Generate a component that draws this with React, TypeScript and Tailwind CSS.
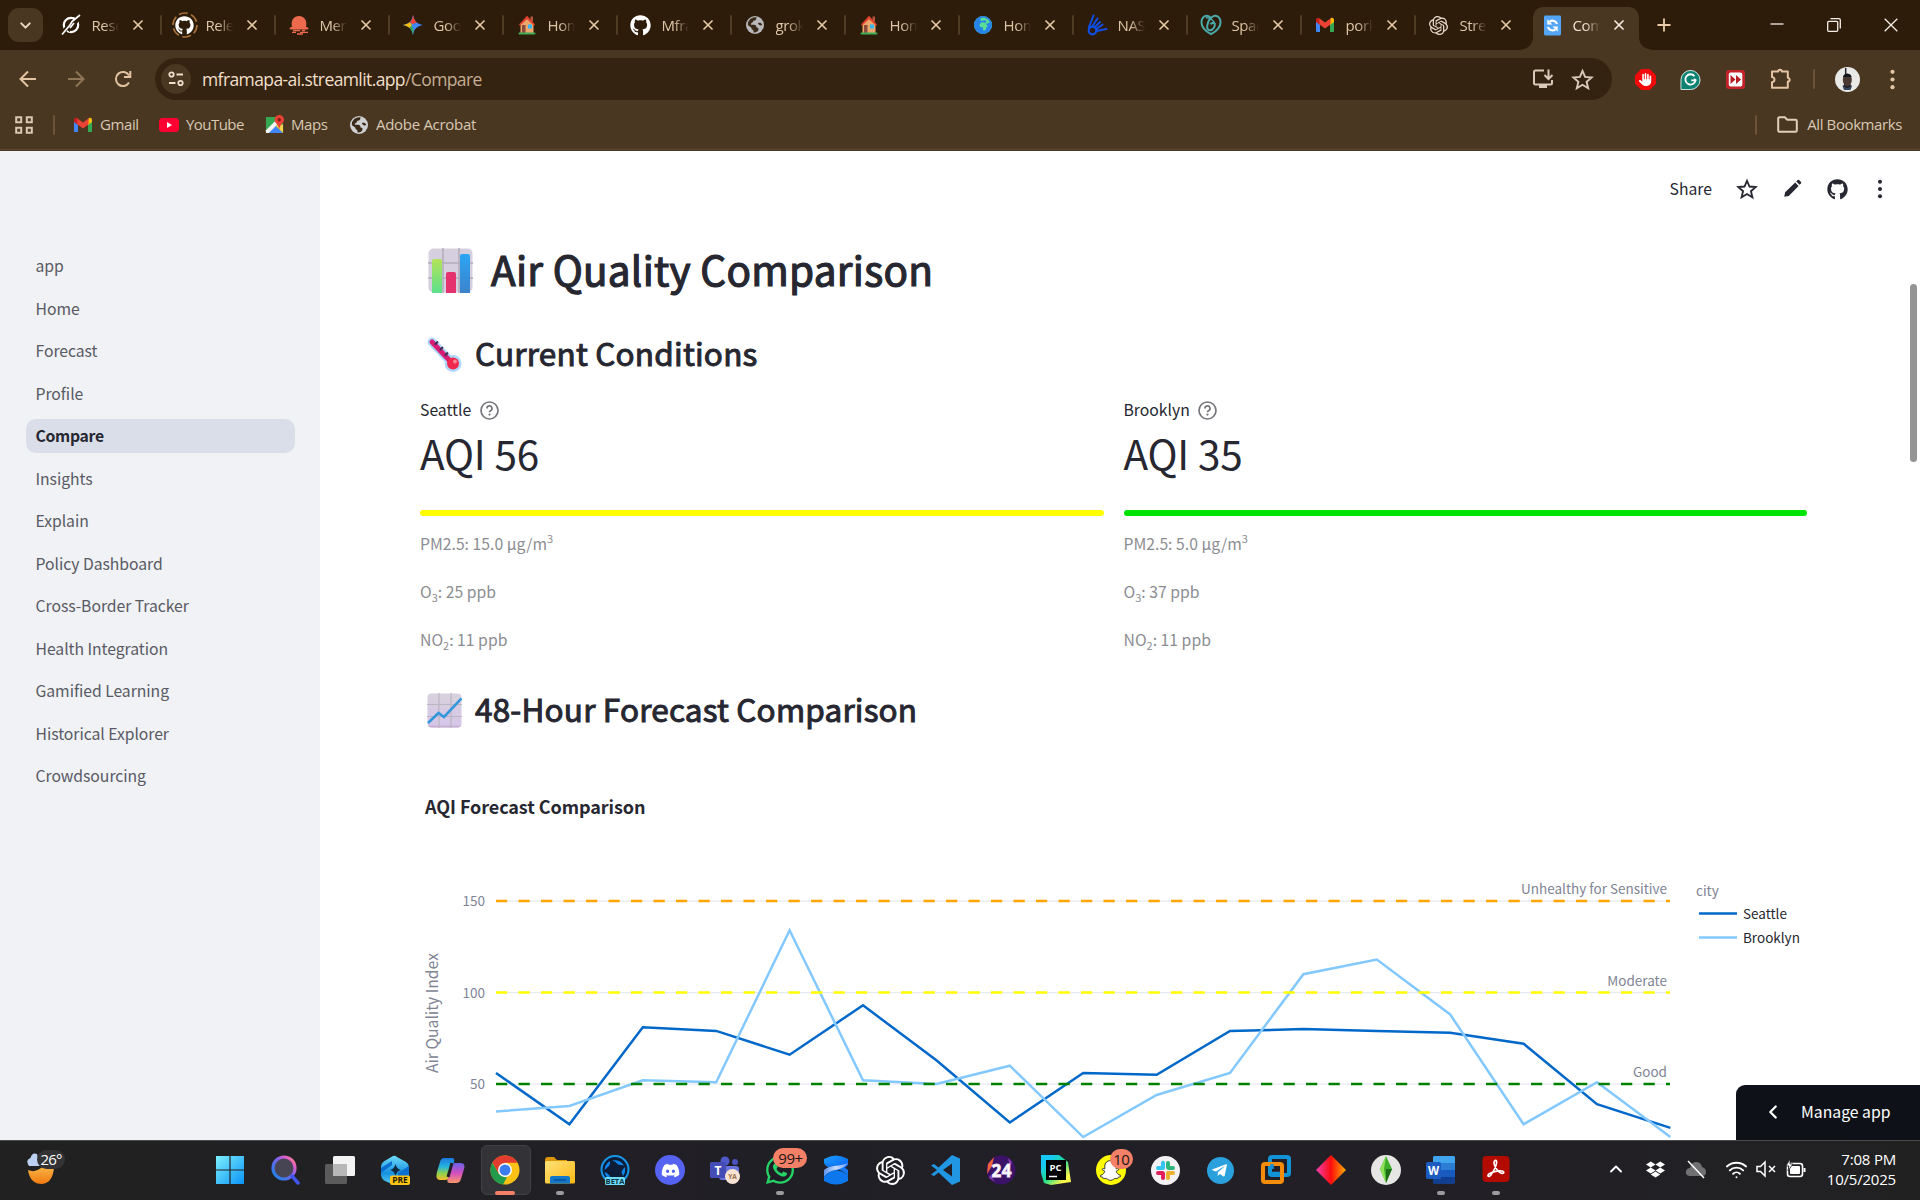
import React from "react";
import { FaGithub, FaDiscord, FaWhatsapp, FaSnapchatGhost, FaTelegramPlane, FaDropbox } from "react-icons/fa";
import { FaEarthAfrica, FaHand } from "react-icons/fa6";
import { SiOpenai } from "react-icons/si";
import { X, ChevronDown, ChevronLeft, ChevronUp, Wifi, Plus } from "lucide-react";

type P = { children?: React.ReactNode };

const Svg = ({ s = 24, vb = "0 0 24 24", children }: P & { s?: number; vb?: string }) => (
  <svg width={s} height={s} viewBox={vb} fill="none" className="shrink-0">{children}</svg>
);

/* ---------- favicons ---------- */
const House = () => (
  <Svg s={20} vb="0 0 20 20">
    <rect x="13.5" y="1.500" width="2.500" height="5" fill="#b5563c" />
    <path d="M3.500 9 10 3l6.500 6V18h-13z" fill="#eda76c" />
    <path d="M2 9.600 10 .8l8 8.800-1 1.200L10 4.200 3 10.800z" fill="#e4442f" />
    <rect x="5" y="10" width="3.500" height="8" fill="#8a4b3b" />
    <rect x="11" y="9.500" width="4" height="4" fill="#37b5f1" />
    <rect x="1.500" y="17.600" width="17" height="1.800" rx=".9" fill="#3fae57" />
  </Svg>
);
const Orbit = () => (
  <Svg s={22} vb="0 0 22 22">
    <circle cx="11" cy="11" r="7.200" stroke="#fff" strokeWidth="2.200" />
    <path d="M2 20 7 13.500M20 2l-6 8.500-6 6" stroke="#2d1c0a" strokeWidth="4" />
    <path d="M2 20.500 10 11l2-3.500L20 1" stroke="#fff" strokeWidth="1.700" />
    <path d="m10 14 4-5" stroke="#fff" strokeWidth="1.700" />
  </Svg>
);
const RingHub = () => (
  <div className="relative flex h-6 w-6 items-center justify-center text-white">
    <FaGithub size={19} />
    <svg width="26" height="26" viewBox="0 0 26 26" className="absolute -left-px -top-px"><circle cx="13" cy="13" r="12" fill="none" stroke="#a9733a" strokeWidth="1.600" strokeDasharray="9 3.500" /></svg>
  </div>
);
const Jelly = () => (
  <Svg s={20} vb="0 0 20 20">
    <path d="M.5 13.500c0-1 1-1 2.500-1.500C1.500 5 5 1 10 1s8.500 4 7 11c1.500.5 2.500.5 2.500 1.500 0 .8-1 1-2 1H2.500c-1 0-2-.2-2-1z" fill="#ee6a4e" />
    <path d="M4 15.500h7M13 15.500h3M3 17.300h4M11 17.300h8M8 19h6" stroke="#ee6a4e" strokeWidth="1.300" />
  </Svg>
);
const Gemini = () => (
  <Svg s={20} vb="0 0 20 20">
    <path d="M10 0c1 6 4 9 10 10-6 1-9 4-10 10C9 14 6 11 0 10 6 9 9 6 10 0z" fill="#3f87f5" />
    <path d="M10 0c1 4 2 6 4 7.500L10 9 6.500 7.500C9 6 9.500 3 10 0z" fill="#ea4335" />
    <path d="M0 10c3-.5 5-1.300 6.500-2.800L9 10l-2.500 3C5 11.500 3 10.500 0 10z" fill="#fbbc04" />
    <path d="M6.600 12.900 9 10.500l1.500 5L10 20c-.6-3.300-1.600-5.600-3.400-7.100z" fill="#34a853" />
  </Svg>
);
const Globe = ({ c = "#b9b9bb", s = 20 }: { c?: string; s?: number }) => (
  <Svg s={s} vb="0 0 20 20">
    <circle cx="10" cy="10" r="9" fill={c} />
    <path d="M11.500 2.300c-.3 1.700-.2 3.200-2 3.200-1.500 0-1.500 1.500-2 2-1 .8-2.200.8-1.500 2.300h3c1.800 0 2.500 1.200 2.500 2.700 1.200.3 2 .2 2 1.500 0 1.700-.9 3.200-3.700 3.600-1.500.1-1.300-.1-1.300-1.300.4-1.500-2-1.300-2-3 0-1.200-1.500-1.400-3.700-3.300A7.300 7.300 0 0 1 11.500 2.300z" fill="#3b2a19" />
    <path d="M13 8c1.500-.8 3.500-.2 4.200 1.500-.5 1.300-1.700 1.300-2.500.7-.9-.3-1.700-1.200-1.700-2.200z" fill="#3b2a19" />
  </Svg>
);
const Earth = () => (
  <div className="flex h-[18px] w-[18px] items-center justify-center rounded-full bg-[#5cdd98] text-[#2583ea]"><FaEarthAfrica size={18} /></div>
);
const Nasa = () => (
  <Svg s={22} vb="0 0 22 22">
    <circle cx="6.500" cy="16.500" r="3.800" stroke="#0f4fe6" strokeWidth="2.200" />
    <path d="M3 13 7.500 1.500M6.500 12 11.500 4.500M9 13l5-5M10.500 15l6-4.500M10.500 17l10-2" stroke="#0f4fe6" strokeWidth="2" strokeLinecap="round" />
  </Svg>
);
const Knot = () => (
  <Svg s={22} vb="0 0 22 22">
    <path d="M10.500 3.500C6.500 0 1.500 2.500 1.500 8.500c0 5 4.500 9 9.500 11.700 5-2.700 9.500-6.700 9.500-11.700 0-6-5-8.500-9-5C7 7 5.500 16 9.500 16.200c4 .2 6-4.700 5-6.700-.8-1.200-3-.5-4 .8" stroke="#4aa9a9" strokeWidth="2" />
    <path d="M6 4c4-1 8 3 9 6" stroke="#4aa9a9" strokeWidth="1.500" />
  </Svg>
);
const Gmail = ({ s = 20 }: { s?: number }) => (
  <Svg s={s} vb="0 0 20 20">
    <path d="M1 5.500V16c0 .6.500 1 1 1h3V8z" fill="#4285f4" />
    <path d="M19 5.500V16c0 .6-.5 1-1 1h-3V8z" fill="#34a853" />
    <path d="M15 5v5l4-3V5c0-2-2-2.800-3.300-1.800z" fill="#fbbc04" />
    <path d="M1 5v2l4 3V5l-.7-1.800C3 2.200 1 3 1 5z" fill="#c5221f" />
    <path d="M4.300 3.200 10 7.500l5.700-4.300L15.500 9.500 10 13.500 4.500 9.500z" fill="#ea4335" />
  </Svg>
);
const Sync = () => (
  <svg width="17" height="21" viewBox="0 0 18 21" fill="none">
    <rect width="18" height="21" rx="1.500" fill="#54a5f5" />
    <path d="M6 6.200c3-1.800 7-.6 7.800 2.800M12 14.800c-3 1.800-7 .6-7.800-2.800" stroke="#fff" strokeWidth="2.200" />
    <path d="M3.500 4v5.500H9zM14.500 17v-5.500H9z" fill="#fff" />
  </svg>
);

const tabs: [React.ReactNode, string][] = [
  [<Orbit />, "Rese"], [<RingHub />, "Relea"], [<Jelly />, "Mem"], [<Gemini />, "Goog"], [<House />, "Home"],
  [<FaGithub size={21} color="#fff" />, "Mfra"], [<Globe />, "grok"], [<House />, "Home"], [<Earth />, "Home"],
  [<Nasa />, "NASA"], [<Knot />, "Spac"], [<Gmail />, "porka"], [<SiOpenai size={19} color="#e9dccd" />, "Stre"],
];

const TabBody = ({ icon, label, active }: { icon: React.ReactNode; label: string; active?: boolean }) => (
  <>
    <div className="ml-[11.500px] flex w-6 shrink-0 items-center justify-center">{icon}</div>
    <div className={"w-[27px] overflow-hidden whitespace-nowrap text-[15px] tracking-[-0.4px] [mask-image:linear-gradient(to_right,#000_45%,transparent)] " + (active ? "ml-2 text-[#f0e2d2]" : "ml-[9px] text-[#dfc5a8]")}>{label}</div>
    <div className={"flex w-5 justify-center " + (active ? "ml-[9px] text-[#f4e8dc]" : "ml-[9px] text-[#e2c6a5]")}><X size={16} strokeWidth={2.600} /></div>
  </>
);

const TabStrip = () => (
  <div className="flex h-[50px] items-center bg-[#2d1c0a]">
    <div className="ml-2 flex h-[34px] w-[35px] items-center justify-center rounded-[11px] bg-[#4a3721] text-[#eddac6]"><ChevronDown size={17} strokeWidth={2.800} /></div>
    <div className="ml-1 flex items-center">
      {tabs.map(([icon, label], i) => (
        <div key={i} className="flex h-[34px] w-[114px] items-center">
          <TabBody icon={icon} label={label} />
          <div className={"-mr-px ml-auto h-5 w-0.5 rounded " + (i === 12 ? "bg-transparent" : "bg-[#4f3c25]")} />
        </div>
      ))}
    </div>
    <div className="relative flex h-[43px] w-[112px] items-center self-end">
      <svg width="138" height="43" viewBox="0 0 138 43" className="absolute -left-3 top-0"><path d="M0 43c10 0 16-5 16-13V12C16 4 20 0 27 0h84c7 0 11 4 11 12v18c0 8 6 13 16 13z" fill="#4a3721" /></svg>
      <div className="relative flex items-center pb-[7px]"><TabBody icon={<Sync />} label="Comp" active /></div>
    </div>
    <div className="ml-[13px] text-[#eacdab]"><Plus size={20} strokeWidth={2.200} /></div>
    <div className="ml-auto mr-[22px] flex items-center gap-[43px] text-[#f6efe7]">
      <Svg s={14} vb="0 0 14 14"><path d="M.5 6h13" stroke="currentColor" strokeWidth="1.300" /></Svg>
      <Svg s={14} vb="0 0 14 14"><rect x=".7" y="3.300" width="10" height="10" rx="1" stroke="currentColor" strokeWidth="1.300" /><path d="M3.500.7H12c.8 0 1.300.5 1.300 1.300v8.500" stroke="currentColor" strokeWidth="1.300" /></Svg>
      <Svg s={14} vb="0 0 14 14"><path d="m.7.7 12.600 12.600m0-12.600L.7 13.300" stroke="currentColor" strokeWidth="1.300" /></Svg>
    </div>
  </div>
);

const Star = ({ s = 20, w = 1.8 }: { s?: number; w?: number }) => (
  <Svg s={s}><path d="m12 3 2.700 6.300 6.800.6-5.200 4.500 1.600 6.700L12 17.500 6.100 21.100l1.600-6.700L2.500 9.900l6.800-.6z" stroke="currentColor" strokeWidth={w} /></Svg>
);
const Dots = ({ s = 24 }: { s?: number }) => (
  <Svg s={s}><circle cx="12" cy="4" r="2.200" fill="currentColor" /><circle cx="12" cy="12" r="2.200" fill="currentColor" /><circle cx="12" cy="20" r="2.200" fill="currentColor" /></Svg>
);

const Toolbar = () => (
  <div className="flex h-[58px] items-center bg-[#4a3721] text-[#e3c5a3]">
    <div className="ml-[18.500px]"><Svg s={18} vb="0 0 18 18"><path d="M17 9H2M9 1.500 1.500 9 9 16.500" stroke="currentColor" strokeWidth="2" /></Svg></div>
    <div className="ml-[30px] text-[#8f7656]"><Svg s={18} vb="0 0 18 18"><path d="M1 9h15M9 1.500 16.500 9 9 16.500" stroke="currentColor" strokeWidth="2" /></Svg></div>
    <div className="ml-[29px]"><Svg s={18} vb="0 0 18 18"><path d="M15 12.500A7 7 0 1 1 15 5.500" stroke="currentColor" strokeWidth="2" /><path d="M16.300 1v6H10" stroke="currentColor" strokeWidth="2" /></Svg></div>
    <div className="ml-[23.500px] flex h-[42px] w-[1457px] items-center rounded-full bg-[#342310]">
      <div className="ml-[6px] flex h-[30px] w-[30px] items-center justify-center rounded-full bg-[#4a3721] text-[#efdecb]">
        <Svg s={16} vb="0 0 16 16"><circle cx="3.500" cy="3.500" r="2.200" stroke="currentColor" strokeWidth="1.800" /><path d="M8.500 3.500H15M1 12h6.500" stroke="currentColor" strokeWidth="1.900" /><circle cx="12.500" cy="12" r="2.200" stroke="currentColor" strokeWidth="1.800" /></Svg>
      </div>
      <div className="ml-[11px] pt-px text-[17.500px] leading-none tracking-[-0.600px] text-[#f2dfca]">mframapa-ai.streamlit.app<span className="text-[#c4ad94]">/Compare</span></div>
      <div className="ml-auto mr-[18px] flex items-center gap-[17.500px] text-[#d9c9b8]">
        <Svg s={22} vb="0 0 22 22"><path d="M12 2.500H3.500c-1 0-1.500.5-1.500 1.500v11c0 1 .5 1.500 1.500 1.500h15c1 0 1.500-.5 1.500-1.500v-3" stroke="currentColor" strokeWidth="2" /><path d="M7 16h8v4H7z" fill="currentColor" /><path d="M16.500 1.500v9m-4-3.500 4 4 4-4" stroke="currentColor" strokeWidth="2" /></Svg>
        <Star s={23} w={2} />
      </div>
    </div>
    <div className="ml-[23px] flex items-center gap-[24px]">
      <div className="relative flex h-[21px] w-[21px] items-center justify-center text-white"><svg width="21" height="21" viewBox="0 0 21 21" className="absolute"><path d="M6.200 0h8.600L21 6.200v8.600L14.800 21H6.200L0 14.800V6.200z" fill="#f10a0a" /></svg><FaHand size={13} className="relative" /></div>
      <Svg s={21} vb="0 0 22 22"><path d="M1 21.500V11A10 10 0 1 1 11 21.500z" fill="#0b8272" stroke="#d8ece5" strokeWidth="1" /><path d="M15.200 7.500A5.400 5.400 0 1 0 16.300 12h-4.500m4.500 0-1.500-1.700" stroke="#fff" strokeWidth="1.900" /></Svg>
      <Svg s={21} vb="0 0 21 21"><rect x="1" y="1" width="19" height="19" rx="3" fill="#c4232b" /><rect x="3.800" y="3.500" width="13.500" height="14" rx="2" fill="#fff" /><path d="m5.500 6 5 4.500-5 4.500zM11 6l5 4.500-5 4.500z" fill="#b51f25" /></Svg>
      <Svg s={22} vb="0 0 22 22"><path d="M2 3.500h6.200a1.800 1.800 0 0 1 3.600 0h6v6.300a1.800 1.800 0 0 1 0 3.700v6.300H2v-5.500c3.300-.4 3.300-5 0-5.400z" stroke="currentColor" strokeWidth="2" strokeLinejoin="round" /></Svg>
    </div>
    <div className="ml-[21px] h-5 w-0.5 rounded bg-[#6b5238]" />
    <Avatar />
    <div className="ml-[21px]"><Dots s={23} /></div>
  </div>
);
const Avatar = () => (
  <div className="ml-5">
    <Svg s={25} vb="0 0 25 25"><circle cx="12.500" cy="12.500" r="12.500" fill="#e9e9e6" /><path d="M10.700 1v7" stroke="#23252d" strokeWidth="1.500" /><path d="M7.500 19c1.500-2 8-2 9.500 0l-1.500 4h-6.500z" fill="#39445d" /><ellipse cx="12.300" cy="13" rx="4.500" ry="6.500" fill="#4a3833" /><path d="M8 10c0-4.500 8.600-4.500 8.600 0z" fill="#15161b" /><path d="M9 17q3.300 5 6.600 0v2q-3.300 4-6.600 0z" fill="#1d1a1e" /></Svg>
  </div>
);

const Bookmarks = () => (
  <div className="flex h-[42px] items-center border-b border-[#5d4632] bg-[#4a3721] pb-[8px] pt-0 text-[15px] leading-none tracking-[-0.4px] text-[#d8c8b4]">
    <div className="ml-[15px]"><Svg s={18} vb="0 0 18 18"><path d="M1.200 1.200h5v5h-5zM11.800 1.200h5v5h-5zM1.200 11.800h5v5h-5zM11.800 11.800h5v5h-5z" stroke="currentColor" strokeWidth="2" /></Svg></div>
    <div className="ml-5 h-5 w-0.5 rounded bg-[#6b5238]" />
    <div className="ml-[18px]"><Gmail /></div><span className="ml-[7px] w-[59px]">Gmail</span>
    <svg width="20" height="14" viewBox="0 0 20 14" className="shrink-0"><rect width="20" height="14" rx="3.500" fill="#ff0033" /><path d="m8 4 5 3-5 3z" fill="#fff" /></svg>
    <span className="ml-[7px] w-[79px] whitespace-nowrap tracking-[-0.55px]">YouTube</span>
    <Svg s={19} vb="0 0 20 20"><path d="M1 2h11l7 7v10H1z" fill="#34a853" /><path d="m1 19 9-9 9 9z" fill="#4285f4" /><path d="m1 16 12-12 3 3L4 19H1z" fill="#f4f4f4" /><path d="m11 11 8 8v-9z" fill="#fbd24b" /><path d="M15 0a5 5 0 0 1 5 5c0 3.500-4 4.500-5 10-1-5.500-5-6.500-5-10a5 5 0 0 1 5-5z" fill="#ea4335" /><circle cx="15" cy="5" r="1.800" fill="#7b1d15" /></Svg>
    <span className="ml-[7px] w-[58px]">Maps</span>
    <Globe c="#cfd0d2" s={20} />
    <span className="ml-[7px] whitespace-nowrap tracking-[-0.3px]">Adobe Acrobat</span>
    <div className="ml-auto h-5 w-0.5 rounded bg-[#6b5238]" />
    <div className="ml-[20px]"><Svg s={21} vb="0 0 21 21"><path d="M1.200 4.500c0-.8.500-1.300 1.300-1.300h5.300l2.500 2.500h8.200c.8 0 1.300.5 1.300 1.300v9.500c0 .8-.5 1.300-1.300 1.300h-16c-.8 0-1.300-.5-1.300-1.300z" stroke="#e0cfbc" strokeWidth="2" /></Svg></div>
    <span className="ml-[9px] mr-[18px] whitespace-nowrap">All Bookmarks</span>
  </div>
);

/* ---------- page ---------- */
const nav = ["app", "Home", "Forecast", "Profile", "Compare", "Insights", "Explain", "Policy Dashboard", "Cross-Border Tracker", "Health Integration", "Gamified Learning", "Historical Explorer", "Crowdsourcing"];

const Sidebar = () => (
  <aside className="flex w-[320px] shrink-0 flex-col bg-[#f0f2f6] pl-[26px] pr-[25px] pt-[93.700px]">
    {nav.map((n) => (
      <div key={n} className="flex h-[42.500px] shrink-0 items-center">
        <div className={"flex h-[34px] w-full items-center rounded-[10px] pl-[9.500px] text-[15.750px] leading-none " + (n === "Compare" ? "bg-[#dadee9] font-bold text-[#262730] tracking-[-0.3px]" : "text-[#595a63] tracking-[-0.05px]")}>{n}</div>
      </div>
    ))}
  </aside>
);

const BarEmoji = () => (
  <Svg s={45} vb="0 0 45 45">
    <rect x=".5" y=".5" width="44" height="44" rx="5" fill="#d6cfdf" />
    <path d="M15 0v45M31 0v45M0 15h45M0 30h45" stroke="#b3adba" strokeWidth="1.500" />
    <defs><linearGradient id="gb" x1="0" y1="0" x2="0" y2="1"><stop stopColor="#b4e35a" /><stop offset="1" stopColor="#5be08b" /></linearGradient><linearGradient id="bb" x1="0" y1="0" x2="0" y2="1"><stop stopColor="#2ba6f3" /><stop offset="1" stopColor="#3c82cd" /></linearGradient></defs>
    <path d="M4 45V13q0-2 2-2h6q2 0 2 2v32z" fill="url(#gb)" /><path d="M18 45V26q0-2 2-2h6q2 0 2 2v19z" fill="#e5326f" /><path d="M32 45V8q0-2 2-2h6q2 0 2 2v37z" fill="url(#bb)" />
  </Svg>
);
const ThermoEmoji = () => (
  <Svg s={35} vb="0 0 35 35">
    <path d="m5 5 20 21" stroke="#add8fb" strokeWidth="9" strokeLinecap="round" /><circle cx="26" cy="26.500" r="8.500" fill="#add8fb" />
    <path d="m5 5 20 21" stroke="#d81d74" strokeWidth="5" strokeLinecap="round" /><circle cx="26" cy="26.500" r="6" fill="#f1294f" /><circle cx="28" cy="24.500" r="2" fill="#fb8695" />
    <path d="m8.500 7 1.800-1.800M13.500 12.500l1.800-1.800M18.500 18l1.800-1.800" stroke="#3b3158" strokeWidth="2.200" strokeLinecap="round" />
  </Svg>
);
const TrendEmoji = () => (
  <Svg s={35} vb="0 0 35 35">
    <defs><linearGradient id="tp" x1="0" y1="0" x2="0" y2="1"><stop stopColor="#d8d2dc" /><stop offset=".93" stopColor="#d5c6e8" /><stop offset="1" stopColor="#b89bc4" /></linearGradient></defs>
    <rect x=".5" y=".5" width="34" height="34" rx="4" fill="url(#tp)" />
    <path d="M12 0v35M24 0v35M0 11.500h35M0 23.500h35" stroke="#bcb5c3" strokeWidth="1.200" />
    <path d="M1 30 11.500 20l5.500 4L34.500 5.500" stroke="#3596dc" strokeWidth="2.600" />
  </Svg>
);

const Metric = ({ city, aqi, pm, o3, no2, bar }: { city: string; aqi: number; pm: string; o3: number; no2: number; bar: string }) => (
  <div className="flex w-[683.500px] flex-col">
    <div className="flex h-[30px] items-center text-[15.750px] leading-none text-[#262730]">
      {city}
      <span className="ml-[8.500px] text-[#75767c]"><Svg s={19} vb="0 0 19 19"><circle cx="9.500" cy="9.500" r="8.500" stroke="currentColor" strokeWidth="1.700" /><path d="M7 7.500a2.500 2.500 0 1 1 3.500 2.200c-.7.400-1 .7-1 1.600" stroke="currentColor" strokeWidth="1.700" /><circle cx="9.500" cy="13.600" r="1.100" fill="currentColor" /></Svg></span>
    </div>
    <div className="flex h-[60px] items-center pb-[4px] text-[40.500px] leading-none tracking-[-0.2px] text-[#262730]">AQI {aqi}</div>
    <div className={"mt-[25px] h-[6px] rounded-full " + bar} />
    <div className="mt-1 flex flex-col text-[15.750px] leading-none text-[#8c8d92]">
      <div className="flex h-12 items-center">PM2.5: {pm} μg/m<sup className="-top-1.5 text-[11px]">3</sup></div>
      <div className="flex h-12 items-center">O<sub className="top-[5px] text-[11px]">3</sub>: {o3} ppb</div>
      <div className="flex h-12 items-center">NO<sub className="top-[5px] text-[11px]">2</sub>: {no2} ppb</div>
    </div>
  </div>
);

const seattle = [56, 28, 81, 79, 66, 93, 63, 29, 56, 55, 79, 80, 79, 78, 72, 39, 26];
const brooklyn = [35, 38, 52, 51, 134, 52, 50, 60, 21, 44, 56, 110, 118, 88, 28, 51, 21];
const pts = (d: number[]) => d.map((v, i) => `${76 + i * 73.4},${328 - (v - 50) * 1.83}`).join(" ");
const levels: [number, number, string, string][] = [[145, 150, "#ffa500", "Unhealthy for Sensitive"], [236.5, 100, "#ffff00", "Moderate"], [328, 50, "#008000", "Good"]];

const Chart = () => (
  <svg width="1400" height="384" viewBox="0 0 1400 384" className="block shrink-0" fill="none">
    <text x="5" y="58" fontSize="18" fontWeight="700" fill="#262730" textLength="220.500">AQI Forecast Comparison</text>
    {levels.map(([y, v]) => (
      <g key={v}>
        <path d={`M76 ${y}H1250`} stroke="#e6eaf1" strokeWidth="1.250" />
        <text x="65" y={y + 5} fontSize="13.500" textAnchor="end" fill="#808495">{v}</text>
      </g>
    ))}
    <polyline points={pts(seattle)} stroke="#0068c9" strokeWidth="2.500" />
    <polyline points={pts(brooklyn)} stroke="#83c9ff" strokeWidth="2.500" />
    {levels.map(([y, v, c, t]) => (
      <g key={v}>
        <path d={`M76 ${y}H1250`} stroke={c} strokeWidth="2.500" strokeDasharray="11.250 11.250" />
        <text x="1247" y={y - 7} fontSize="13.500" textAnchor="end" fill="#808495">{t}</text>
      </g>
    ))}
    <text transform="translate(18 257) rotate(-90)" fontSize="15.750" textAnchor="middle" fill="#808495" textLength="120">Air Quality Index</text>
    <text x="1276" y="140" fontSize="13.500" fill="#808495">city</text>
    <path d="M1279 157.500h38" stroke="#0068c9" strokeWidth="2.500" />
    <path d="M1279 181.500h38" stroke="#83c9ff" strokeWidth="2.500" />
    <text x="1323" y="163" fontSize="13.500" fill="#262730">Seattle</text>
    <text x="1323" y="187" fontSize="13.500" fill="#262730">Brooklyn</text>
  </svg>
);

const Page = () => (
  <div className="relative flex h-[989px] overflow-hidden bg-white font-['Noto_Sans_CJK_SC',sans-serif]">
    <Sidebar />
    <main className="flex min-w-0 flex-1 flex-col pl-[100px]">
      <div className="flex h-[76px] shrink-0 items-center justify-end pr-[29px] text-[#262730]">
        <span className="mr-[24px] text-[15.750px] leading-none">Share</span>
        <Star s={22} w={2} />
        <span className="ml-[23px]"><Svg s={22}><path d="m3.500 20.500 1-5L15.500 5l3.700 3.700L8.500 19.500zM16.700 3.800l1.500-1.500q.8-.6 1.600 0l2 2q.7.8 0 1.600l-1.500 1.500z" fill="currentColor" /></Svg></span>
        <FaGithub size={21} className="ml-[24px]" />
        <span className="ml-[21px]"><Dots s={22} /></span>
      </div>
      <h1 className="flex h-[86px] shrink-0 items-center pl-2 text-[40.500px] font-normal leading-none tracking-[0.270px] text-[#262730] [-webkit-text-stroke:1.200px_#262730]"><BarEmoji /><span className="ml-[18px] whitespace-nowrap pb-[1px]">Air Quality Comparison</span></h1>
      <h2 className="flex h-[82px] shrink-0 items-center pl-[7px] text-[31.500px] font-normal leading-none tracking-[0.210px] text-[#262730] [-webkit-text-stroke:1px_#262730]"><ThermoEmoji /><span className="ml-[13px] whitespace-nowrap pb-[3px]">Current Conditions</span></h2>
      <div className="flex shrink-0 gap-5">
        <Metric city="Seattle" aqi={56} pm="15.0" o3={25} no2={11} bar="bg-[#ffff00]" />
        <Metric city="Brooklyn" aqi={35} pm="5.0" o3={37} no2={11} bar="bg-[#00e400]" />
      </div>
      <h2 className="flex h-[92px] shrink-0 items-center pl-[7px] text-[31.500px] font-normal leading-none tracking-[0.190px] text-[#262730] [-webkit-text-stroke:1px_#262730]"><TrendEmoji /><span className="ml-[13px] whitespace-nowrap pb-[3px]">48-Hour Forecast Comparison</span></h2>
      <Chart />
    </main>
    <div className="absolute right-[3px] top-[133px] h-[178px] w-[7px] rounded-full bg-[#949494]" />
    <div className="absolute bottom-0 right-0 flex h-[55px] w-[184px] items-center rounded-tl-[9px] bg-[#0e1117] pb-px pl-[26px] text-[15.750px] leading-none text-white"><ChevronLeft size={22} strokeWidth={2.500} /><span className="ml-[17px] whitespace-nowrap">Manage app</span></div>
  </div>
);

/* ---------- taskbar ---------- */
const Defs = () => (
  <defs>
    <linearGradient id="win" x1="0" y1="0" x2="1" y2="1"><stop stopColor="#7df0fd" /><stop offset="1" stopColor="#0a93f6" /></linearGradient>
    <linearGradient id="srch" x1="0" y1="1" x2="1" y2="0"><stop stopColor="#1187e8" /><stop offset=".55" stopColor="#7a62ea" /><stop offset=".8" stopColor="#e45fc4" /><stop offset="1" stopColor="#f7a05c" /></linearGradient>
    <linearGradient id="pre" x1="0" y1="0" x2="0" y2="1"><stop stopColor="#6fdcfa" /><stop offset=".6" stopColor="#1590e0" /><stop offset="1" stopColor="#5fd3f0" /></linearGradient>
    <linearGradient id="cpl" x1="0" y1="0" x2="0" y2="1"><stop stopColor="#1a78e0" /><stop offset=".4" stopColor="#28b4dd" /><stop offset=".7" stopColor="#8fd14b" /><stop offset="1" stopColor="#f4bb2b" /></linearGradient>
    <linearGradient id="cpr" x1="0" y1="0" x2="0" y2="1"><stop stopColor="#6a62e8" /><stop offset=".5" stopColor="#d24fc0" /><stop offset="1" stopColor="#fb9868" /></linearGradient>
    <linearGradient id="fld" x1="0" y1="0" x2="1" y2="1"><stop stopColor="#ffe27a" /><stop offset="1" stopColor="#fcb813" /></linearGradient>
    <linearGradient id="db" x1="0" y1="0" x2="1" y2="1"><stop stopColor="#1aa0ff" /><stop offset="1" stopColor="#0a5ff0" /></linearGradient>
    <linearGradient id="db2" x1="0" y1="0" x2="1" y2="0"><stop stopColor="#5d94ee" /><stop offset=".5" stopColor="#c7dbfc" /><stop offset="1" stopColor="#6f9ff0" /></linearGradient>
    <linearGradient id="pc" x1="0" y1="0" x2="1" y2="1"><stop offset=".2" stopColor="#15c8f5" /><stop offset=".5" stopColor="#1fdd8c" /><stop offset=".8" stopColor="#fcf84a" /></linearGradient>
    <linearGradient id="dia" x1="0" y1="0" x2="1" y2="0"><stop stopColor="#f23fb2" /><stop offset=".5" stopColor="#fb0c0c" /><stop offset="1" stopColor="#ffb000" /></linearGradient>
    <linearGradient id="mn" x1="0" y1="0" x2="0" y2="1"><stop stopColor="#fbbd4c" /><stop offset="1" stopColor="#f07a10" /></linearGradient>
  </defs>
);
const T = ({ children }: P) => <svg width="30" height="30" viewBox="0 0 30 30" fill="none">{children}</svg>;
const Pill = ({ t, wide }: { t: string; wide?: boolean }) => (
  <div className={"absolute -top-[6px] flex h-5 items-center justify-center rounded-full bg-[#f58068] text-[15px] leading-none tracking-[-0.5px] text-[#1c1514] " + (wide ? "left-[9px] w-[34px]" : "left-[14px] w-[23px]")}>{t}</div>
);

const apps: [React.ReactNode, number][] = [
  [<T><path d="M1 1h13.400v13.400H1zM15.600 1H29v13.400H15.600zM1 15.600h13.400V29H1zM15.600 15.600H29V29H15.600z" fill="url(#win)" /></T>, 0],
  [<T><circle cx="14" cy="13" r="11" stroke="url(#srch)" strokeWidth="3.200" fill="#474553" /><path d="m22 21 6 7" stroke="#4155ea" strokeWidth="3.500" strokeLinecap="round" /></T>, 0],
  [<T><rect x="8" y="1" width="22" height="20" rx="1.500" fill="#f3f3f3" /><rect x="0" y="9" width="22" height="20" rx="1.500" fill="#666" fillOpacity=".85" /><rect x="8" y="9" width="14" height="12" fill="#b8b8b8" /></T>, 0],
  [<T><path d="M1 12q0-4 3.500-6L13 1q2-1 4 1l9 5q3 2 3 5v9q0 3-3 4.500l-8 4q-3 1-5 0l-9-4Q1 23 1 20z" fill="url(#pre)" /><path d="M1 13 12 6v4L1 18zM29 11 18 18v9l11-8z" fill="#0b6fd2" /><path d="M15.500 9q1 5 5.500 6-4.500 1-5.500 6-1-5-5.500-6 4.500-1 5.500-6z" fill="#102a43" /><rect x="10" y="20.500" width="20" height="9.500" rx="2" fill="#ffc414" /><text x="20" y="28.300" fontSize="8.500" fontWeight="700" textAnchor="middle" fill="#221a00">PRE</text></T>, 0],
  [<T><path d="M9 3h8q3 0 2 4l-4 14q-1 4-5 4H5q-5 0-3-8l3-10q1-4 4-4z" fill="url(#cpl)" /><path d="M20 8h5q6 0 4 6l-3 10q-1 4-5 4h-6q-4 0-2-5l3-11q1-4 4-4z" fill="url(#cpr)" /><path d="m17 8-4 14" stroke="#211f25" strokeWidth="3" /></T>, 0],
  [<T><circle cx="15" cy="15" r="14.500" fill="#fbc116" /><path d="M2.400 7.700A14.500 14.500 0 0 1 27.600 7.700H15l-6.300 11z" fill="#e33b2e" /><path d="M2.400 7.700 8.700 18.700l6.300 3.600h2L13 29.500A14.500 14.500 0 0 1 2.400 7.700z" fill="#229a4b" /><circle cx="15" cy="15" r="7" fill="#fff" /><circle cx="15" cy="15" r="5.500" fill="#3b7ded" /></T>, 2],
  [<T><path d="M0 5q0-3 3-3h6l3 3h10v6H0z" fill="#dc9607" /><rect x="0" y="6" width="30" height="22.500" rx="1.500" fill="url(#fld)" /><path d="M5 28.500V23q0-2 2-2h16q2 0 2 2v5.500z" fill="#1478c8" /><path d="M9 25h12" stroke="#0a4c94" strokeWidth="1.500" /></T>, 1],
  [<T><circle cx="15" cy="14.500" r="13.500" stroke="#1797ea" strokeWidth="2" fill="#0d1d38" /><path d="M12 5.500q8-1.500 12 5l-6-1q-2-3-6-4zM10 6q-5 3-5.500 9L9 11q1.500-2 1-5zM4.500 17q1 6 7 7.500l-2-4q-2-3-5-3.500zM25 12q1 5-2 9l-1.500-4q1-3 3.500-5zM13 25q4 1 8-2l-4-.5q-3 0-4 2.500z" fill="#0d86ec" /><rect x="5" y="22" width="20" height="8" rx="1.500" fill="#6edcf5" /><text x="15" y="29" fontSize="7.500" fontWeight="700" textAnchor="middle" fill="#0c3444">BETA</text></T>, 0],
  [<div className="flex h-[30px] w-[30px] items-center justify-center rounded-full bg-[#5663f2] text-white"><FaDiscord size={19} /></div>, 0],
  [<T><circle cx="15" cy="6" r="4.500" fill="#5059c9" /><circle cx="25" cy="7" r="3" fill="#4a52bd" /><rect x="9" y="11" width="20" height="14" rx="3" fill="#6a73dc" /><rect x="0" y="7" width="16" height="16" rx="1.500" fill="#444db5" /><text x="8" y="19.500" fontSize="12" fontWeight="700" textAnchor="middle" fill="#fff">T</text><circle cx="22.500" cy="21.500" r="7.500" fill="#f8e3d2" /><text x="22.500" y="24" fontSize="6.500" fontWeight="700" textAnchor="middle" fill="#9a6c48">YA</text></T>, 0],
  [<div className="relative text-[#25d366]"><FaWhatsapp size={32} /><Pill t="99+" wide /></div>, 1],
  [<T><path d="M3 4q12-7 24 0v6q-3 4-10 5Q4 13 3 8z" fill="url(#db)" /><path d="M3 7q3 5 12 7 10 2 12 8v-7q-2-3-10-4Q6 10 3 7z" fill="#1576ee" /><path d="M27 8q-3 5-12 7T3 22v-7q3-3 10-4 10-1 14-3z" fill="url(#db2)" /><path d="M27 26q-12 7-24 0v-4q4-6 12-7 11 2 12 7z" fill="#0d78ee" /></T>, 0],
  [<SiOpenai size={29} color="#fff" />, 0],
  [<T><path d="m21 0 8 3.500v23L21 30 7.500 17.500 3 21l-3-1.500L6 15 0 10.500 3 9l4.500 3.500zM21 8.500 12 15l9 6.500z" fill="#2196e3" fillRule="evenodd" /></T>, 0],
  [<T><circle cx="15" cy="15" r="14.500" fill="#3b1268" /><path d="M2 9 8 2l-2 9-5 8z" fill="#f2633c" /><path d="m22 3 4 4-2 5zM4 20l5 7-6-4z" fill="#8a3fb0" /><text x="15.500" y="21.500" fontSize="17" fontWeight="700" textAnchor="middle" fill="#fff" stroke="#efe2f7" strokeWidth=".8" textLength="20">24</text></T>, 0],
  [<T><path d="M0 0h18l9 7 3 20-20 3-7-2L0 18z" fill="url(#pc)" /><rect x="5" y="5" width="20" height="20" fill="#000" /><text x="14.500" y="15.500" fontSize="9.500" fontWeight="700" textAnchor="middle" fill="#fff">PC</text><path d="M8 21.500h8" stroke="#fff" strokeWidth="1.500" /></T>, 0],
  [<div className="relative flex h-[30px] w-[30px] items-center justify-center rounded-full bg-[#fffc00] text-white"><FaSnapchatGhost size={21} className="[stroke-width:22px] [stroke:#222]" /><Pill t="10" /></div>, 0],
  [<div className="flex h-[29px] w-[29px] items-center justify-center rounded-full bg-[#f3f1f3]"><svg width="21" height="21" viewBox="0 0 21 21" fill="none" strokeWidth="4" strokeLinecap="round"><path d="M8 2.800V8M3 8h4.500" stroke="#36c5f0" /><path d="M13 3v4.500M13.500 8H18" stroke="#2eb67d" /><path d="M13 13v5M13.500 13H18" stroke="#ecb22e" /><path d="M8 13.500V18M3 13h4.500" stroke="#e01e5a" /></svg></div>, 0],
  [<div className="flex h-[27px] w-[27px] items-center justify-center rounded-full bg-[#2aa1dd] text-white"><FaTelegramPlane size={17} className="mr-0.5" /></div>, 0],
  [<T><rect x="9" y="2" width="19" height="18" rx="2" stroke="#1193d6" strokeWidth="4" /><rect x="2" y="9" width="19" height="18" rx="2" stroke="#f58c0a" strokeWidth="4" /><path d="M11 14V9M11 18.500h8" stroke="#1193d6" strokeWidth="3.500" /></T>, 0],
  [<T><path d="m15 0 15 15-15 15L0 15z" fill="url(#dia)" /></T>, 0],
  [<T><circle cx="15" cy="15" r="15" fill="#e6e6e4" /><path d="m15 1 6 13-6 14-6-14z" fill="#3fae2a" /><path d="m15 1-2 13 2 14-6-14z" fill="#8fe25a" /><path d="m15 14 6 0-6 14z" fill="#1d6b19" /></T>, 0],
  [<T><rect x="7" y="1" width="22" height="27.500" rx="1.500" fill="#185abd" /><path d="M7 2.500Q7 1 8.500 1h19Q29 1 29 2.500V8H7z" fill="#41a5ee" /><path d="M7 8h22v7H7z" fill="#2b7cd3" /><path d="M7 22h22v5q0 1.500-1.500 1.500h-19Q7 28.500 7 27z" fill="#103f91" /><rect x="0" y="7" width="15" height="17" rx="1.500" fill="#1c5cc0" /><text x="7.500" y="20" fontSize="11.500" fontWeight="700" textAnchor="middle" fill="#fff">W</text></T>, 1],
  [<T><rect x="1.500" y="1" width="27" height="26" rx="4" fill="#b30b00" /><path d="M14 5.500q2-.5 1.500 3-.7 4.500-6 12-1.500 1.500-2.500.5-.5-1.500 3-3.200 6-2.500 11-1.800 2.500.8 1.500 2-1.800 1-4.500-1.200Q13.500 12.500 13 8q0-2 1-2.500z" stroke="#fff" strokeWidth="1.700" /></T>, 1],
];

const Taskbar = () => (
  <div className="flex h-[60px] items-center border-t border-[#484a4c] bg-[linear-gradient(to_right,#212121,#211f26_40%,#221f26_70%,#212122)]">
    <svg width="0" height="0" className="absolute"><Defs /></svg>
    <div className="relative ml-[26px] h-[42px] w-[176.500px] shrink-0">
      <svg width="40" height="42" viewBox="0 0 40 42" className="block"><path d="M2 20q2 14 14 14 11-1 12-17-8-5-13 1-6 5-13 2z" fill="url(#mn)" /><path d="M3 16q-4-6 1.500-8Q6 2 11 4l3 12z" fill="#bcd0f3" /></svg>
      <div className="absolute left-[11px] top-0 flex h-[19px] w-[28px] items-center justify-center rounded-full bg-[#333335] text-[15px] leading-none tracking-[-0.8px] text-white">26°</div>
    </div>
    {apps.map(([icon, state], i) => (
      <div key={i} className="relative flex h-[59px] w-[55.060px] shrink-0 items-center justify-center pb-px">
        {state === 2 && <div className="absolute left-[3px] top-1 h-[50px] w-[50px] rounded-md border border-[#424146] bg-[#333236]" />}
        <div className="relative flex">{icon}</div>
        {state === 2 && <div className="absolute bottom-[5px] h-1 w-5 rounded-full bg-[#f58068]" />}
        {state === 1 && <div className="absolute bottom-[5px] h-1 w-2 rounded-full bg-[#9b9a9d]" />}
      </div>
    ))}
    <div className="ml-auto mr-[24px] flex items-center pb-[3px] text-white">
      <ChevronUp size={20} strokeWidth={2.300} />
      <FaDropbox size={19} className="ml-[20px]" />
      <svg width="22" height="20" viewBox="0 0 22 20" fill="none" className="ml-[20px]"><path d="M4 17q-4-1-3-5 1-3 4-3 1-6 6-6t6 5q4 1 4 5t-4 4z" fill="#707073" /><path d="m3 2 16 17" stroke="#fff" strokeWidth="1.500" /></svg>
      <Wifi size={23} strokeWidth={2} className="ml-[18px]" />
      <svg width="21" height="20" viewBox="0 0 21 20" fill="none" className="ml-[8px]"><path d="M1 7.500h3.500L9 3v14l-4.500-4.500H1zM13 7l6 6m0-6-6 6" stroke="#fff" strokeWidth="1.500" /></svg>
      <svg width="22" height="20" viewBox="0 0 22 20" fill="none" className="ml-[8px]"><rect x="2.500" y="4.500" width="15" height="13" rx="2.500" stroke="#fff" strokeWidth="1.600" /><rect x="5" y="7" width="10" height="8" rx="1" fill="#fff" /><path d="M19.500 9v4" stroke="#fff" strokeWidth="2" /><path d="M5 0 1 7h3l-1 5 5-7H5z" fill="#fff" stroke="#212122" strokeWidth=".8" /></svg>
      <div className="ml-[19px] flex w-[70px] flex-col items-end text-[15px] leading-[20px] tracking-[-0.200px]"><span className="whitespace-nowrap">7:08 PM</span><span className="whitespace-nowrap">10/5/2025</span></div>
    </div>
  </div>
);

export default function App() {
  return (
    <div className="h-[1200px] w-[1920px] overflow-hidden bg-[#2d1c0a] font-['Open_Sans','Noto_Sans',sans-serif]">
      <TabStrip />
      <Toolbar />
      <Bookmarks />
      <div className="h-px bg-[#4a3721]" />
      <Page />
      <Taskbar />
    </div>
  );
}
